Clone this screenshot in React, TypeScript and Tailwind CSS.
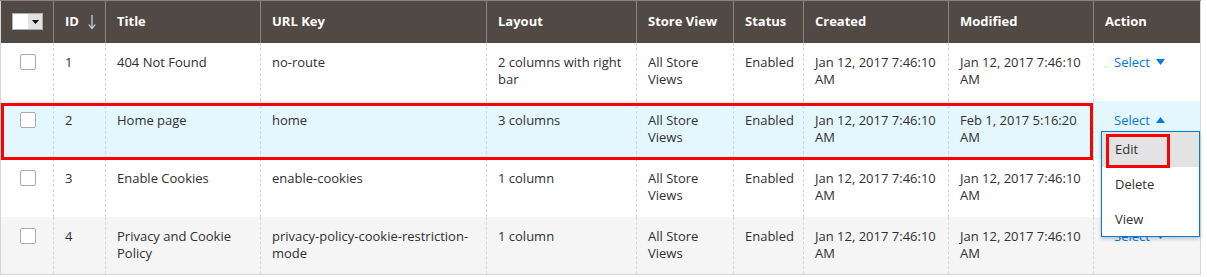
import React from "react";

interface Page {
  id: number;
  title: string;
  urlKey: string;
  layout: string;
  created: string;
  modified: string;
}

const pages: Page[] = [
  { id: 1, title: "404 Not Found", urlKey: "no-route", layout: "2 columns with right bar", created: "Jan 12, 2017 7:46:10 AM", modified: "Jan 12, 2017 7:46:10 AM" },
  { id: 2, title: "Home page", urlKey: "home", layout: "3 columns", created: "Jan 12, 2017 7:46:10 AM", modified: "Feb 1, 2017 5:16:20 AM" },
  { id: 3, title: "Enable Cookies", urlKey: "enable-cookies", layout: "1 column", created: "Jan 12, 2017 7:46:10 AM", modified: "Jan 12, 2017 7:46:10 AM" },
  { id: 4, title: "Privacy and Cookie Policy", urlKey: "privacy-policy-cookie-restriction-mode", layout: "1 column", created: "Jan 12, 2017 7:46:10 AM", modified: "Jan 12, 2017 7:46:10 AM" },
];

const widths = [53, 52, 155, 226, 150, 97, 70, 145, 145, 107];

const Caret = ({ up = false }: { up?: boolean }) => (
  <svg width="9" height="6" viewBox="0 0 9 6" className="inline-block ml-[6px] mb-[2px]">
    <path d={up ? "M0 6 L4.5 0 L9 6 Z" : "M0 0 L4.5 6 L9 0 Z"} fill="#007bdb" />
  </svg>
);

const Th = ({ children, last = false }: { children?: React.ReactNode; last?: boolean }) => (
  <th
    className={`h-[42px] px-[11px] text-left align-middle whitespace-nowrap font-bold text-white text-[13px] ${
      last ? "" : "border-r border-[#8a837f]"
    }`}
  >
    {children}
  </th>
);

const Td = ({ children, last = false }: { children?: React.ReactNode; last?: boolean }) => (
  <td
    className={`h-[58px] px-[11px] pt-[11px] align-top leading-[17px] ${
      last ? "" : "border-r border-dashed border-[#d6d6d6]"
    }`}
  >
    {children}
  </td>
);

export default function App() {
  return (
    <div className="bg-white w-[1207px] h-[277px] text-[13px] text-[#303030]" style={{ fontFamily: '"Open Sans", "Noto Sans", sans-serif' }}>
      <div className="relative w-[1201px]">
        <table className="table-fixed border-collapse w-[1201px] border-l border-r border-b border-[#d6d6d6]">
          <colgroup>
            {widths.map((w, i) => (
              <col key={i} style={{ width: w }} />
            ))}
          </colgroup>
          <thead>
            <tr className="bg-[#514943] border-t border-[#8a837f]">
              <Th>
                <div className="flex border border-[#adadad] w-[31px] h-[17px]">
                  <div className="w-[15px] bg-white" />
                  <div className="w-[14px] bg-[#e3e3e3] flex items-center justify-center">
                    <svg width="7" height="4" viewBox="0 0 7 4">
                      <path d="M0 0 L3.5 4 L7 0 Z" fill="#000" />
                    </svg>
                  </div>
                </div>
              </Th>
              <Th>
                ID
                <svg width="8" height="15" viewBox="0 0 8 15" className="inline-block ml-[9px] mb-[1px] align-middle">
                  <path d="M4 0 V13 M0.8 9.5 L4 13.5 L7.2 9.5" stroke="#cfd2ff" strokeWidth="1.2" fill="none" />
                </svg>
              </Th>
              <Th>Title</Th>
              <Th>URL Key</Th>
              <Th>Layout</Th>
              <Th>Store View</Th>
              <Th>Status</Th>
              <Th>Created</Th>
              <Th>Modified</Th>
              <Th last>Action</Th>
            </tr>
          </thead>
          <tbody>
            {pages.map((p) => (
              <tr
                key={p.id}
                className={p.id === 2 ? "bg-[#e5f7fe]" : p.id === 4 ? "bg-[#f5f5f5]" : "bg-white"}
              >
                <Td>
                  <div className="ml-[8px] w-[16px] h-[16px] border border-[#adadad] rounded-[2px] bg-white" />
                </Td>
                <Td>{p.id}</Td>
                <Td>{p.title}</Td>
                <Td>{p.urlKey}</Td>
                <Td>{p.layout}</Td>
                <Td>All Store Views</Td>
                <Td>Enabled</Td>
                <Td>{p.created}</Td>
                <Td>{p.modified}</Td>
                <Td last>
                  <span className="ml-[9px] text-[#007bdb]">
                    Select
                    <Caret up={p.id === 2} />
                  </span>
                </Td>
              </tr>
            ))}
          </tbody>
        </table>

        {/* highlight around row 2 */}
        <div className="absolute left-[1px] top-[103px] w-[1092px] h-[57px] border-[3px] border-[#ff0000] pointer-events-none" />

        {/* open action menu */}
        <ul className="absolute left-[1101px] top-[131px] w-[99px] h-[106px] bg-white border border-[#007bdb] shadow-[0_2px_4px_rgba(0,0,0,0.2)] z-10">
          <li className="relative h-[35px] bg-[#e3e3e3] pl-[13px] pt-[8px]">
            Edit
            <div className="absolute left-[4px] top-[2px] w-[64px] h-[34px] border-[3px] border-[#ff0000]" />
          </li>
          <li className="h-[35px] pl-[13px] pt-[8px]">Delete</li>
          <li className="h-[34px] pl-[13px] pt-[8px]">View</li>
        </ul>
      </div>
    </div>
  );
}
